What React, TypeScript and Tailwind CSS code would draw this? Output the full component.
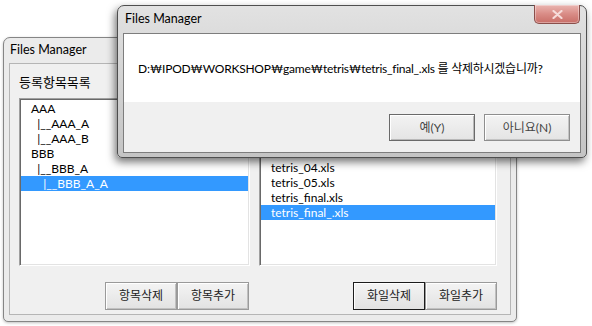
const font = "font-['Lato','Noto_Sans_CJK_KR',sans-serif]";

const treeItems = ["AAA", "  |__AAA_A", "  |__AAA_B", "BBB", "  |__BBB_A", "    |__BBB_A_A"];
// the first rows of the file list lie under the dialog
const fileItems = ["tetris_04.xls", "tetris_05.xls", "tetris_final.xls", "tetris_final_.xls"];

function ListBox({ items, selected, width, offset }: { items: string[]; selected: number; width: string; offset: string }) {
  return (
    <div
      className={`${width} h-[168px] border border-t-[#a0a0a0] border-l-[#a0a0a0] border-b-[#ffffff] border-r-[#ffffff] bg-white shadow-[inset_1px_1px_0_#696969,inset_-1px_-1px_0_#e3e3e3] ${offset} px-[1px]`}
    >
      {items.map((it, i) => (
        <div
          key={i}
          className={`h-[15px] leading-[15px] text-[12px] pl-[10px] whitespace-pre ${
            i === selected ? "bg-[#3399ff] text-white" : "text-black"
          }`}
        >
          {it}
        </div>
      ))}
    </div>
  );
}

function Btn({ label, focused }: { label: string; focused?: boolean }) {
  return (
    <div
      className={`w-[72px] h-[28px] flex items-center justify-center text-[12px] text-[#222] bg-gradient-to-b from-[#f4f4f4] to-[#e2e2e2] border ${
        focused ? "border-[#1c1c1c] shadow-[inset_1px_1px_0_#fff]" : "border-[#9a9a9a] shadow-[inset_1px_1px_0_#fff,inset_-1px_-1px_0_#c0c0c0]"
      }`}
    >
      {label}
    </div>
  );
}

function BackWindow() {
  return (
    <div className="absolute left-[3px] top-[37px] w-[514px] h-[285px] rounded-t-[7px] rounded-b-[5px] border border-[#858585] bg-[#ebebeb] px-[5px] pb-[6px] flex flex-col shadow-[0_1px_3px_rgba(0,0,0,0.25)]">
      <div className="h-[25px] flex items-center pl-[1px] text-[12.5px] text-black">Files Manager</div>
      <div className="flex-1 border border-[#b5b5b5] bg-[#f0f0f0] flex gap-[9px] pl-[9px] pt-[10px]">
        <div className="flex flex-col w-[231px]">
          <div className="h-[16px] leading-[16px] text-[13px] text-black">등록항목목록</div>
          <div className="mt-[8px]">
            <ListBox items={treeItems} selected={5} width="w-[231px]" offset="pt-[2px]" />
          </div>
          <div className="mt-[16px] flex justify-end pr-[1px]">
            <Btn label="항목삭제" />
            <Btn label="항목추가" />
          </div>
        </div>
        <div className="flex flex-col w-[238px]">
          <div className="h-[16px]" />
          <div className="mt-[8px]">
            <ListBox items={fileItems} selected={3} width="w-[238px]" offset="pt-[61px]" />
          </div>
          <div className="mt-[16px] flex justify-end">
            <Btn label="화일삭제" focused />
            <Btn label="화일추가" />
          </div>
        </div>
      </div>
    </div>
  );
}

function DialogBtn({ label, def }: { label: string; def?: boolean }) {
  return (
    <div
      className={`w-[86px] h-[27px] flex items-center justify-center text-[12px] text-[#444] bg-gradient-to-b from-[#f3f3f3] to-[#e4e4e4] border ${
        def ? "border-[#6a6a6a] shadow-[inset_1px_1px_0_#fff,inset_-1px_-1px_0_#b8b8b8]" : "border-[#8e8e8e] shadow-[inset_1px_1px_0_#fff,inset_-1px_-1px_0_#c4c4c4]"
      }`}
    >
      {label}
    </div>
  );
}

function Dialog() {
  return (
    <div className="absolute left-[117px] top-[5px] w-[470px] h-[153px] rounded-t-[7px] rounded-b-[5px] border border-[#4e4e4e] bg-gradient-to-b from-[#e2e2e2] via-[#d2d2d2] to-[#c4c4c4] px-[5px] pb-[4px] flex flex-col shadow-[-2px_4px_8px_rgba(0,0,0,0.55)]">
      <div className="relative h-[27px] flex items-center pl-[2px] text-[12.5px] text-black">
        Files Manager
        <div className="absolute right-[1px] top-[-1px] w-[46px] h-[19px] rounded-b-[5px] border border-[#8a4f4b] border-t-0 bg-gradient-to-b from-[#eab5b1] via-[#d98c86] to-[#c86e68] shadow-[inset_0_0_0_1px_rgba(255,255,255,0.35)] flex items-center justify-center">
          <svg width="11" height="9" viewBox="0 0 11 9">
            <path d="M1.5 1 L9.5 8 M9.5 1 L1.5 8" stroke="#f6dcda" strokeWidth="2.2" strokeLinecap="round" />
          </svg>
        </div>
      </div>
      <div className="flex-1 flex flex-col border border-[#7d7d7d] shadow-[inset_0_0_0_1px_#ffffff]">
        <div className="h-[68px] bg-white flex items-center pl-[14px] pt-[2px] text-[12px] tracking-[-0.25px] text-black">
          D:₩IPOD₩WORKSHOP₩game₩tetris₩tetris_final_.xls 를 삭제하시겠습니까?
        </div>
        <div className="flex-1 bg-[#f0f0f0] flex justify-end items-start gap-[9px] pt-[12px] pr-[10px]">
          <DialogBtn label="예(Y)" def />
          <DialogBtn label="아니요(N)" />
        </div>
      </div>
    </div>
  );
}

export default function App() {
  return (
    <div className={`relative w-[592px] h-[326px] bg-white overflow-hidden ${font}`}>
      <BackWindow />
      <Dialog />
    </div>
  );
}
